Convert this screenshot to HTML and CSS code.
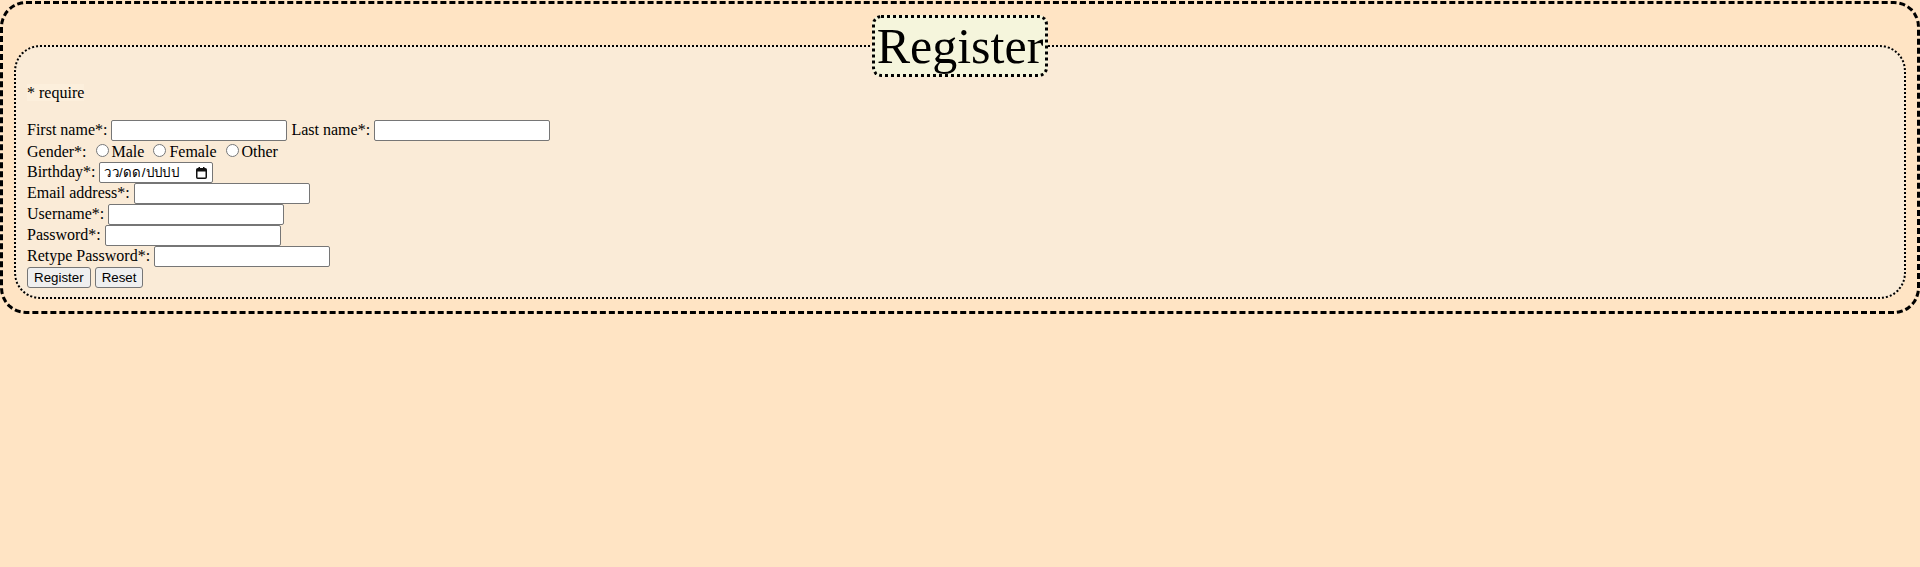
FILE: index.html
```html
<!DOCTYPE html>
<html lang="th">
<head>
<meta charset="utf-8">
<title>Register</title>
<link rel="stylesheet" href="styles.css">
</head>
<body>
<div class="outer">
  <form class="form">
    <fieldset class="box">
      <legend class="title">Register</legend>
      <div class="note-line"><span class="note">* require</span></div>
      <div class="blank"></div>
      <div class="row">First name*: <input class="field" type="text"> Last name*: <input class="field" type="text"></div>
      <div class="row">Gender*: <input class="radio" type="radio" name="g">Male <input class="radio" type="radio" name="g">Female <input class="radio" type="radio" name="g">Other</div>
      <div class="row">Birthday*: <span class="date"><span class="date-text">วว/ดด/ปปปป</span><svg class="cal" width="11" height="12" viewBox="0 0 11 12"><rect x="0.75" y="1.75" width="9.5" height="9.5" rx="1" fill="none" stroke="#111" stroke-width="1.5"/><rect x="1" y="2" width="9" height="2.5" fill="#111"/><rect x="2.5" y="0" width="1.5" height="2.5" fill="#111"/><rect x="7" y="0" width="1.5" height="2.5" fill="#111"/></svg></span></div>
      <div class="row">Email address*: <input class="field" type="email"></div>
      <div class="row">Username*: <input class="field" type="text"></div>
      <div class="row">Password*: <input class="field" type="password"></div>
      <div class="row">Retype Password*: <input class="field" type="password"></div>
      <div class="row"><button class="btn" type="submit">Register</button> <button class="btn" type="reset">Reset</button></div>
    </fieldset>
  </form>
</div>
</body>
</html>
```

FILE: styles.css
```css
html, body {
  margin: 0;
  background: #ffe4c4;
}
body {
  padding-top: 1px;
  font-family: "Liberation Serif", "Times New Roman", serif;
  font-size: 16px;
  color: #000;
}
.outer {
  border: 3px dashed #000;
  border-radius: 26px;
  background: #ffe4c4;
  padding: 11px 11px 12px 11px;
}
.form {
  margin: 0;
}
.box {
  margin: 0;
  border: 2px dotted #000;
  border-radius: 26px;
  background: #faebd7;
  padding: 7px 11px 9px 11px;
  min-width: 0;
}
.title {
  margin: 0 auto;
  padding: 0 2px;
  font-size: 50px;
  line-height: 56px;
  background: #f5f5dc;
  border: 3px dotted #000;
  border-radius: 9px;
}
.note-line {
  height: 18px;
  line-height: 18px;
}
.note {
  background: #fcefdc;
}
.blank {
  height: 18px;
}
.row {
  height: 21px;
  white-space: nowrap;
}
.field {
  box-sizing: border-box;
  width: 176px;
  height: 21px;
  margin: 0;
  padding: 1px 2px;
  border: 1px solid #767676;
  border-radius: 2px;
  background: #fff;
  font-family: "Liberation Sans", Arial, sans-serif;
  font-size: 13.33px;
}
.radio {
  width: 13px;
  height: 13px;
  margin: 3px 3px 0 5px;
}
.date {
  display: inline-flex;
  align-items: center;
  box-sizing: border-box;
  width: 114px;
  height: 21px;
  padding: 0 4px 0 4px;
  border: 1px solid #767676;
  border-radius: 2px;
  background: #fff;
  vertical-align: baseline;
  font-family: "Liberation Sans", Arial, sans-serif;
  font-size: 13.33px;
}
.date-text {
  flex: 1;
  letter-spacing: 0.3px;
}
.cal {
  display: block;
  margin-right: 1px;
}
.btn {
  margin: 0;
  padding: 2px 6px;
  border: 1px solid #767676;
  border-radius: 3px;
  background: #efefef;
  font-family: "Liberation Sans", Arial, sans-serif;
  font-size: 13.33px;
  color: #000;
}
```
